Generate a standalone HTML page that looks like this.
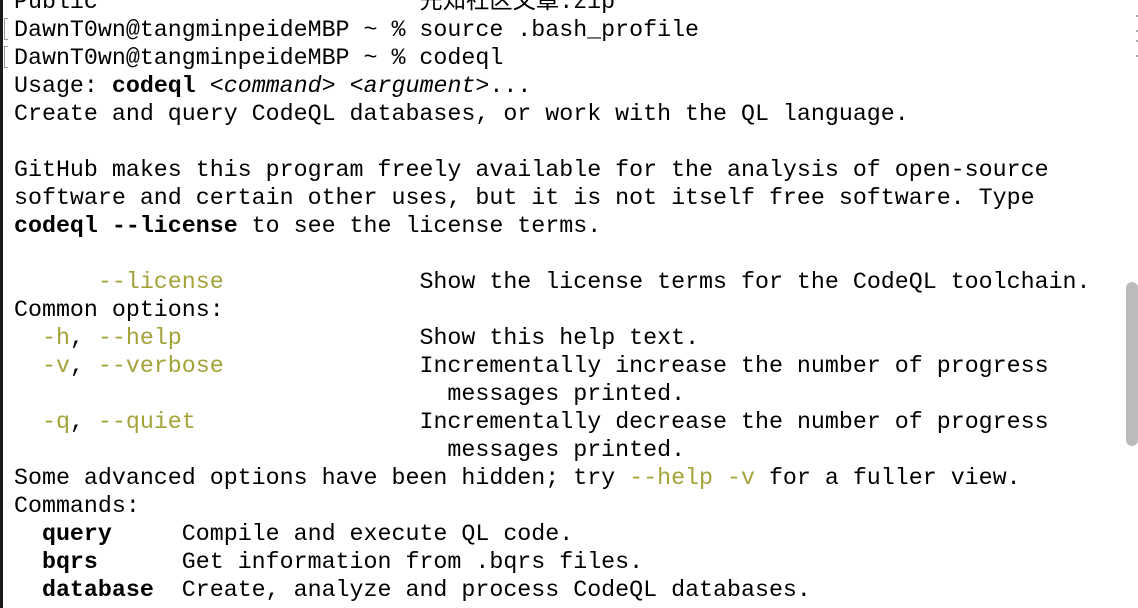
<!DOCTYPE html>
<html><head><meta charset="utf-8"><style>
html,body{margin:0;padding:0;background:#fff;width:1138px;height:608px;overflow:hidden;position:relative}
.bar{position:absolute;left:0;top:0;width:3px;height:608px;background:#1a1a1a}
pre{position:absolute;left:14px;top:-12px;margin:0;font-family:"Liberation Mono","Noto Sans CJK SC",monospace;font-size:23.3px;line-height:28px;color:#000;white-space:pre}
.y{color:#a3a33a}
b{font-weight:bold}
.br{position:absolute;left:4px;width:4px;height:22px;border:1px solid #999;border-right:none;box-sizing:border-box}
.sb{position:absolute;left:1126px;top:282px;width:12px;height:164px;background:#bbb;border-radius:6px}
.dot{position:absolute;left:1136px;width:2px;height:2px;background:#aaa}
</style></head><body>
<div class="bar"></div>
<div class="br" style="top:18px"></div>
<div class="br" style="top:46px"></div>
<pre>Public                       先知社区文章.zip
DawnT0wn@tangminpeideMBP ~ % source .bash_profile
DawnT0wn@tangminpeideMBP ~ % codeql
Usage: <b>codeql</b> &lt;<i>command</i>&gt; &lt;<i>argument</i>&gt;...
Create and query CodeQL databases, or work with the QL language.

GitHub makes this program freely available for the analysis of open-source
software and certain other uses, but it is not itself free software. Type
<b>codeql --license</b> to see the license terms.

      <span class="y">--license</span>              Show the license terms for the CodeQL toolchain.
Common options:
  <span class="y">-h</span>, <span class="y">--help</span>                 Show this help text.
  <span class="y">-v</span>, <span class="y">--verbose</span>              Incrementally increase the number of progress
                               messages printed.
  <span class="y">-q</span>, <span class="y">--quiet</span>                Incrementally decrease the number of progress
                               messages printed.
Some advanced options have been hidden; try <span class="y">--help -v</span> for a fuller view.
Commands:
  <b>query</b>     Compile and execute QL code.
  <b>bqrs</b>      Get information from .bqrs files.
  <b>database</b>  Create, analyze and process CodeQL databases.</pre>
<div class="dot" style="top:15px"></div>
<div class="dot" style="top:30px"></div>
<div class="dot" style="top:40px"></div>
<div class="dot" style="top:55px"></div>
<div class="sb"></div>
</body></html>
